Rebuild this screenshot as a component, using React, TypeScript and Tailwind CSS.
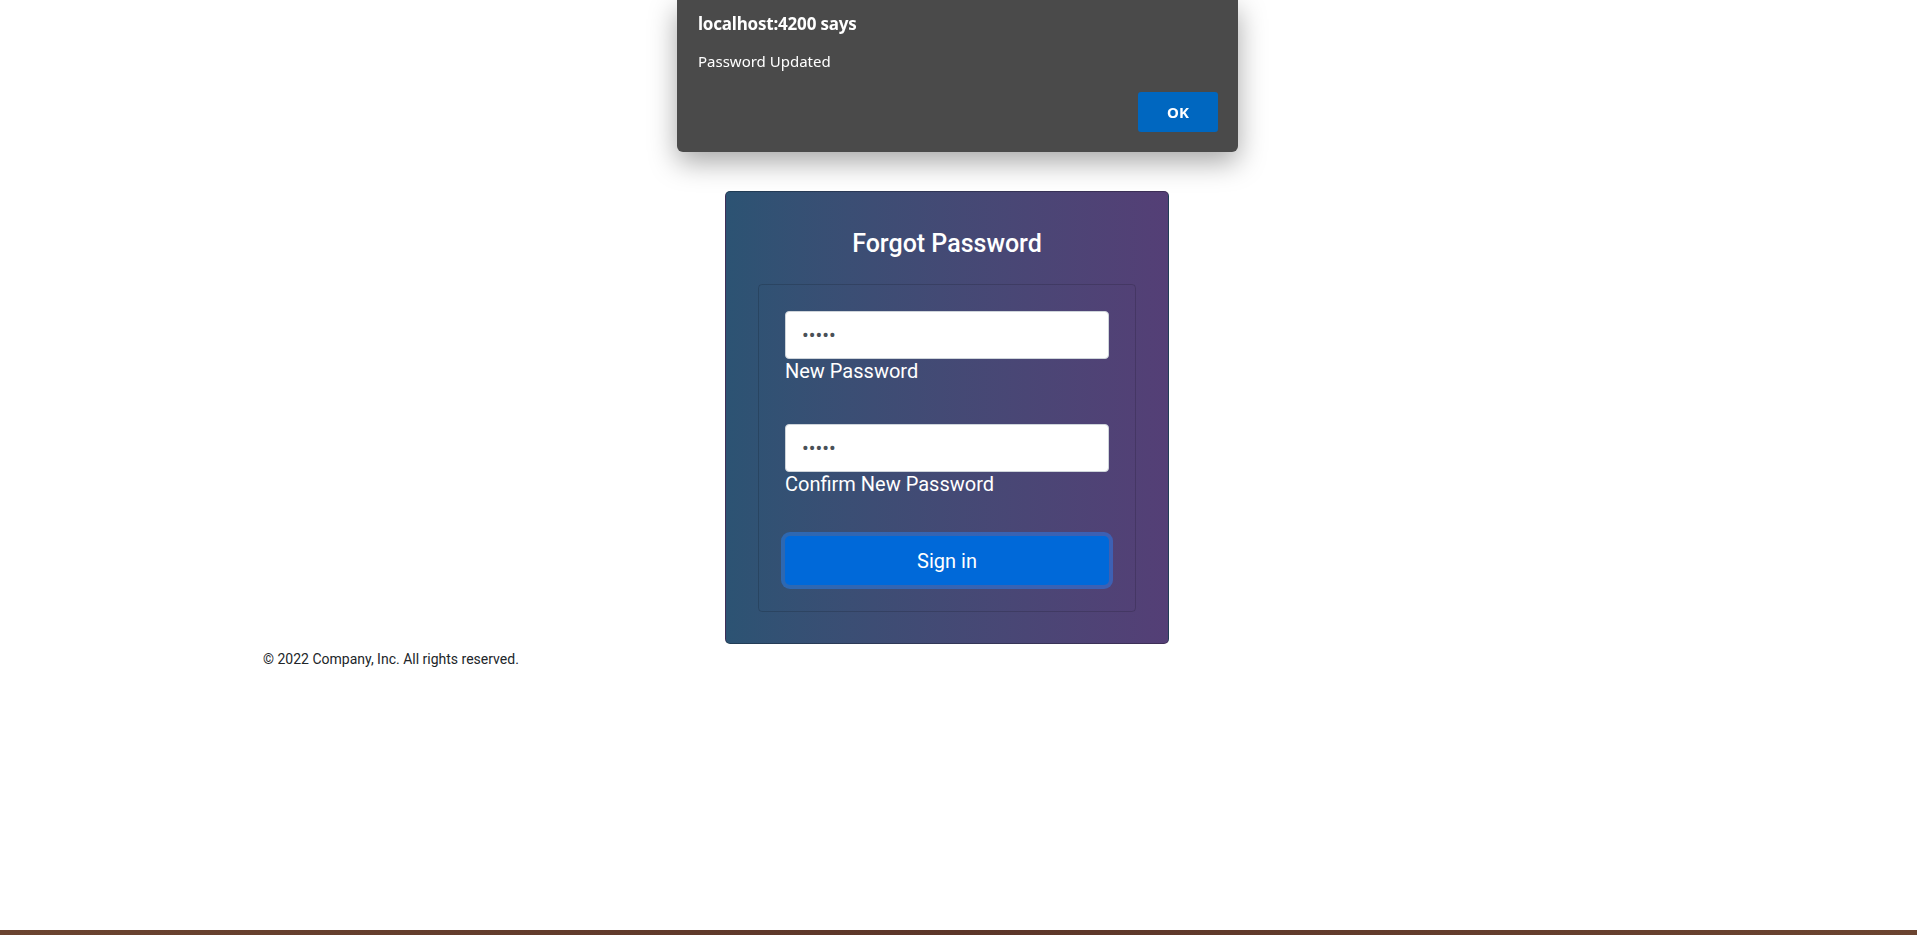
import React from "react";

const AlertDialog = () => {
  return (
    <div className="fixed top-0 left-[677px] w-[561px] h-[152px] bg-[#4a4a4a] rounded-b-[6px] shadow-[0_10px_28px_rgba(0,0,0,0.35)] flex flex-col pl-[21px] pr-[20px] pb-[20px] font-['Noto_Sans',sans-serif] text-white">
      <div className="pt-[12px] text-[17px] font-bold leading-[24px] tracking-[-0.2px]">
        localhost:4200 says
      </div>
      <div className="mt-[15px] text-[15px] leading-[20px]">Password Updated</div>
      <div className="mt-auto flex justify-end">
        <button className="w-[80px] h-[40px] rounded-[3px] bg-[#0067c0] text-[15px] font-bold text-white">
          OK
        </button>
      </div>
    </div>
  );
};

type FieldProps = {
  label: string;
  value: string;
};

const Field = ({ label, value }: FieldProps) => {
  return (
    <div className="flex flex-col">
      <input
        type="password"
        defaultValue={value}
        readOnly
        className="h-[48px] w-full rounded-[4px] border border-[#ced4da] bg-white px-[16px] text-[20px] text-[#495057] outline-none"
      />
      <label className="text-[20px] leading-[24px] text-white">{label}</label>
    </div>
  );
};

const App = () => {
  return (
    <div className="min-h-screen flex flex-col bg-white font-['Roboto',sans-serif]">
      <AlertDialog />
      <main className="flex-1 flex flex-col">
        <div className="flex justify-center pt-[191px] pr-[23px]">
          <div className="w-[444px] rounded-[5px] border border-black/25 bg-linear-to-r from-[#2c5373] to-[#543f76] px-[32px] pb-[31px]">
            <h1 className="pt-[37px] text-center text-[25px] font-medium leading-[30px] text-white">
              Forgot Password
            </h1>
            <div className="mt-[25px] rounded-[4px] border border-black/15 p-[26px] flex flex-col">
              <Field label="New Password" value="12345" />
              <div className="h-[41px]" />
              <Field label="Confirm New Password" value="12345" />
              <button className="mt-[40px] h-[49px] w-full rounded-[5px] bg-[#0069d9] text-[20px] text-white shadow-[0_0_0_4px_rgba(38,132,255,0.45)]">
                Sign in
              </button>
            </div>
          </div>
        </div>
        <footer className="pl-[263px] pt-[5px]">
          <p className="text-[14px] leading-[20px] text-[#212529]">
            © 2022 Company, Inc. All rights reserved.
          </p>
        </footer>
      </main>
      <div className="h-[5px] bg-linear-to-r from-[#6b4430] via-[#5c3629] to-[#6b4430]" />
    </div>
  );
};

export default App;
